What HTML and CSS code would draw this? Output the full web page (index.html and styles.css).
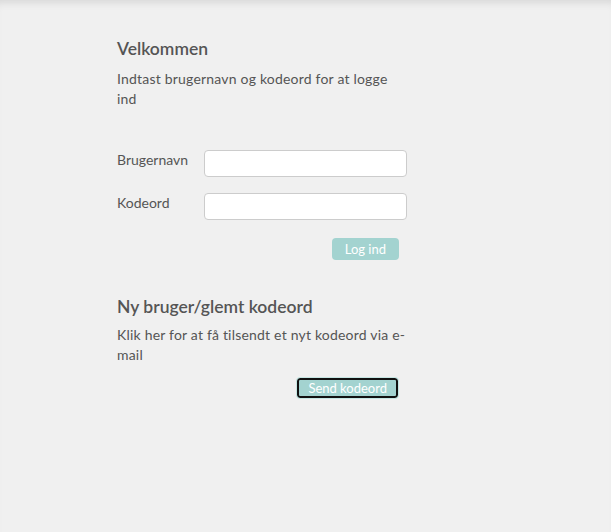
FILE: index.html
```html
<!DOCTYPE html>
<html lang="da">
<head>
<meta charset="utf-8">
<title>Log ind</title>
<link rel="stylesheet" href="styles.css">
</head>
<body>
<main class="page">
  <section class="login">
    <h1 class="title">Velkommen</h1>
    <p class="text">Indtast brugernavn og kodeord for at logge ind</p>
    <form class="form">
      <label class="label" for="user">Brugernavn</label>
      <input class="field" id="user" type="text">
      <label class="label" for="pass">Kodeord</label>
      <input class="field" id="pass" type="password">
      <div class="actions">
        <button class="btn" type="button">Log ind</button>
      </div>
    </form>
  </section>
  <section class="reset">
    <h2 class="title">Ny bruger/glemt kodeord</h2>
    <p class="text">Klik her for at få tilsendt et nyt kodeord via e-mail</p>
    <div class="actions">
      <button class="btn btn-focus" type="button">Send kodeord</button>
    </div>
  </section>
</main>
</body>
</html>
```

FILE: styles.css
```css
html, body {
  margin: 0;
  height: 100%;
}
body {
  background: #f0f0f0;
  box-shadow: inset 0 8px 8px -6px rgba(0,0,0,0.12);
  font-family: Lato, "Noto Sans", sans-serif;
  color: #555;
}
.page {
  width: 290px;
  padding: 37px 0 0 117px;
}
.title {
  margin: 0;
  font-size: 17.5px;
  font-weight: 600;
  line-height: 24px;
  color: #555;
}
.text {
  margin: 8px 0 0;
  font-size: 14px;
  line-height: 20px;
  letter-spacing: 0.2px;
}
.form {
  display: grid;
  grid-template-columns: 87px 203px;
  row-gap: 16px;
  margin-top: 41px;
}
.label {
  font-size: 14px;
  line-height: 20px;
}
.field {
  box-sizing: border-box;
  height: 27px;
  width: 203px;
  margin: 0;
  border: 1px solid #cccccc;
  border-radius: 4px;
  background: #fff;
}
.actions {
  grid-column: 1 / 3;
  display: flex;
  justify-content: flex-end;
  padding-right: 8px;
  margin-top: 2px;
}
.btn {
  box-sizing: border-box;
  height: 22px;
  padding: 0 13px;
  border: 0;
  border-radius: 4px;
  background: #a3d3d0;
  color: #fff;
  font-family: Lato, "Noto Sans", sans-serif;
  font-size: 13px;
  line-height: 20px;
}
.reset {
  margin-top: 35px;
}
.reset .text {
  margin-top: 6px;
}
.reset .actions {
  margin-top: 12px;
}
.btn-focus {
  border: 1px solid #c6e6e3;
  box-shadow: inset 0 0 0 2px #111;
  padding: 0 11px;
}
```
